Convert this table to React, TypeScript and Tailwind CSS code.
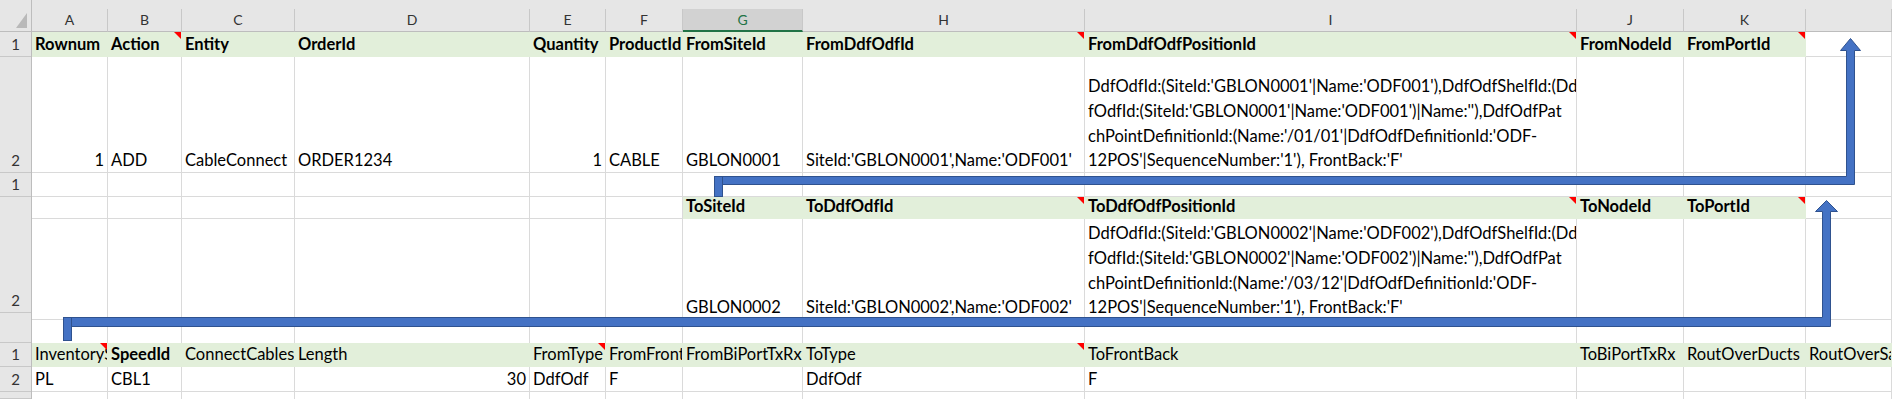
import type { ReactNode } from "react";
import clsx from "clsx";

type Spec = {
  t?: ReactNode;
  b?: boolean; // bold
  r?: boolean; // right aligned
  g?: boolean; // green header fill
  n?: boolean; // red comment marker
};

type Row = { h: string; open?: boolean; cells: Spec[] };

const cols =
  "grid-cols-[76px_74px_113px_235px_76px_77px_120px_282px_492px_107px_122px_86px]";

const letters = ["A", "B", "C", "D", "E", "F", "G", "H", "I", "J", "K", ""];

const hd = (t: string, n = false): Spec => ({ t, b: true, g: true, n });
const gh = (t: string, n = false): Spec => ({ t, g: true, n });
const tx = (t: string, r = false): Spec => ({ t, r });
const blank = (count: number): Spec[] => Array.from({ length: count }, () => ({}));

const fromPos = [
  "DdfOdfId:(SiteId:'GBLON0001'|Name:'ODF001'),DdfOdfShelfId:(Dd",
  "fOdfId:(SiteId:'GBLON0001'|Name:'ODF001')|Name:''),DdfOdfPat",
  "chPointDefinitionId:(Name:'/01/01'|DdfOdfDefinitionId:'ODF-",
  "12POS'|SequenceNumber:'1'), FrontBack:'F'",
];

const toPos = [
  "DdfOdfId:(SiteId:'GBLON0002'|Name:'ODF002'),DdfOdfShelfId:(Dd",
  "fOdfId:(SiteId:'GBLON0002'|Name:'ODF002')|Name:''),DdfOdfPat",
  "chPointDefinitionId:(Name:'/03/12'|DdfOdfDefinitionId:'ODF-",
  "12POS'|SequenceNumber:'1'), FrontBack:'F'",
];

function Lines({ lines }: { lines: string[] }) {
  return (
    <>
      {lines.map((l) => (
        <div key={l}>{l}</div>
      ))}
    </>
  );
}

const rows: Row[] = [
  {
    h: "h-[25px]",
    cells: [
      hd("Rownum"),
      hd("Action", true),
      hd("Entity"),
      hd("OrderId"),
      hd("Quantity"),
      hd("ProductId"),
      hd("FromSiteId"),
      hd("FromDdfOdfId", true),
      hd("FromDdfOdfPositionId", true),
      hd("FromNodeId"),
      hd("FromPortId", true),
      {},
    ],
  },
  {
    h: "h-[116px]",
    cells: [
      tx("1", true),
      tx("ADD"),
      tx("CableConnect"),
      tx("ORDER1234"),
      tx("1", true),
      tx("CABLE"),
      tx("GBLON0001"),
      tx("SiteId:'GBLON0001',Name:'ODF001'"),
      { t: <Lines lines={fromPos} /> },
      ...blank(3),
    ],
  },
  { h: "h-[24px]", cells: blank(12) },
  {
    h: "h-[22px]",
    cells: [
      ...blank(6),
      hd("ToSiteId"),
      hd("ToDdfOdfId", true),
      hd("ToDdfOdfPositionId", true),
      hd("ToNodeId"),
      hd("ToPortId", true),
      {},
    ],
  },
  {
    h: "h-[101px]",
    cells: [
      ...blank(6),
      tx("GBLON0002"),
      tx("SiteId:'GBLON0002',Name:'ODF002'"),
      { t: <Lines lines={toPos} /> },
      ...blank(3),
    ],
  },
  { h: "h-[23px]", open: true, cells: blank(12) },
  {
    h: "h-[24px]",
    cells: [
      gh("InventorySystem", true),
      hd("SpeedId"),
      gh("ConnectCables"),
      gh("Length"),
      gh("FromType", true),
      gh("FromFrontBack"),
      gh("FromBiPortTxRx"),
      gh("ToType", true),
      gh("ToFrontBack"),
      gh("ToBiPortTxRx"),
      gh("RoutOverDucts"),
      gh("RoutOverSameRoute"),
    ],
  },
  {
    h: "h-[25px]",
    cells: [
      tx("PL"),
      tx("CBL1"),
      {},
      tx("30", true),
      tx("DdfOdf"),
      tx("F"),
      {},
      tx("DdfOdf"),
      tx("F"),
      ...blank(3),
    ],
  },
  { h: "h-[7px]", open: true, cells: blank(12) },
];

const labels: { h: string; t?: string }[] = [
  { h: "h-[25px]", t: "1" },
  { h: "h-[116px]", t: "2" },
  { h: "h-[24px]", t: "1" },
  { h: "h-[116px]", t: "2" },
  { h: "h-[30px]" },
  { h: "h-[24px]", t: "1" },
  { h: "h-[25px]", t: "2" },
  { h: "h-[7px]" },
];

function Cell({ t, b, r, g, n, open }: Spec & { open?: boolean }) {
  return (
    <div
      className={clsx(
        "relative flex items-end overflow-hidden border-r px-[3px]",
        !open && "border-b",
        g ? "border-[#e2efda] bg-[#e2efda]" : "border-[#dadada] bg-white",
        r && "justify-end",
        b && "font-bold"
      )}
    >
      {t !== undefined && (
        <div className="translate-y-[1px] whitespace-nowrap">{t}</div>
      )}
      {n && (
        <span className="absolute top-0 right-0 h-[7px] w-[7px] bg-[#ff0000] [clip-path:polygon(0_0,100%_0,100%_100%)]" />
      )}
    </div>
  );
}

function Connectors() {
  return (
    <svg
      className="pointer-events-none absolute top-0 left-0"
      width={1892}
      height={399}
    >
      <g fill="#4472c4" stroke="#2f528f" strokeWidth={1}>
        <path d="M714.5 176.5 H1846.5 V50.5 H1840.5 L1850.5 38.5 L1860.5 50.5 H1854.5 V184.5 H714.5 Z" />
        <rect x={714.5} y={176.5} width={8} height={20} />
        <path d="M63.5 317.5 H1822.5 V211.5 H1815.5 L1826.5 200.5 L1837.5 211.5 H1830.5 V326.5 H63.5 Z" />
        <rect x={63.5} y={317.5} width={8} height={23} />
      </g>
    </svg>
  );
}

export default function App() {
  return (
    <div className="relative h-[399px] w-[1892px] overflow-hidden bg-white text-[16.5px] leading-[24.7px] text-black [font-family:Lato,'Liberation_Sans',sans-serif]">
      {/* column letters */}
      <div className="flex h-[32px] bg-[#e6e6e6]">
        <div className="relative w-[32px] border-r border-b border-[#bdbdbd]">
          <span className="absolute top-[13px] left-[16px] h-[15px] w-[11px] bg-[#b9b9b9] [clip-path:polygon(100%_0,100%_100%,0_100%)]" />
        </div>
        <div className={clsx("grid flex-1 pt-[9px]", cols)}>
          {letters.map((l, i) => (
            <div
              key={i}
              className={clsx(
                "flex items-center justify-center border-r border-[#c8c8c8] text-[14px] leading-none",
                l === "G"
                  ? "border-b-2 border-b-[#217346] bg-[#d2d2d2] text-[#217346]"
                  : "border-b border-b-[#bdbdbd] text-[#333]"
              )}
            >
              {l}
            </div>
          ))}
        </div>
      </div>

      <div className="flex">
        {/* row numbers */}
        <div className="w-[32px] shrink-0 border-r border-[#bdbdbd] bg-[#e6e6e6]">
          {labels.map((l, i) => (
            <div
              key={i}
              className={clsx(
                "flex items-end justify-center border-b border-[#c8c8c8] text-[15px] text-[#333]",
                l.h
              )}
            >
              {l.t && <span className="translate-y-[1px]">{l.t}</span>}
            </div>
          ))}
        </div>

        {/* cells */}
        <div className="flex-1">
          {rows.map((row, ri) => (
            <div key={ri} className={clsx("grid", cols, row.h)}>
              {row.cells.map((c, ci) => (
                <Cell key={ci} {...c} open={row.open} />
              ))}
            </div>
          ))}
        </div>
      </div>

      <Connectors />
    </div>
  );
}
